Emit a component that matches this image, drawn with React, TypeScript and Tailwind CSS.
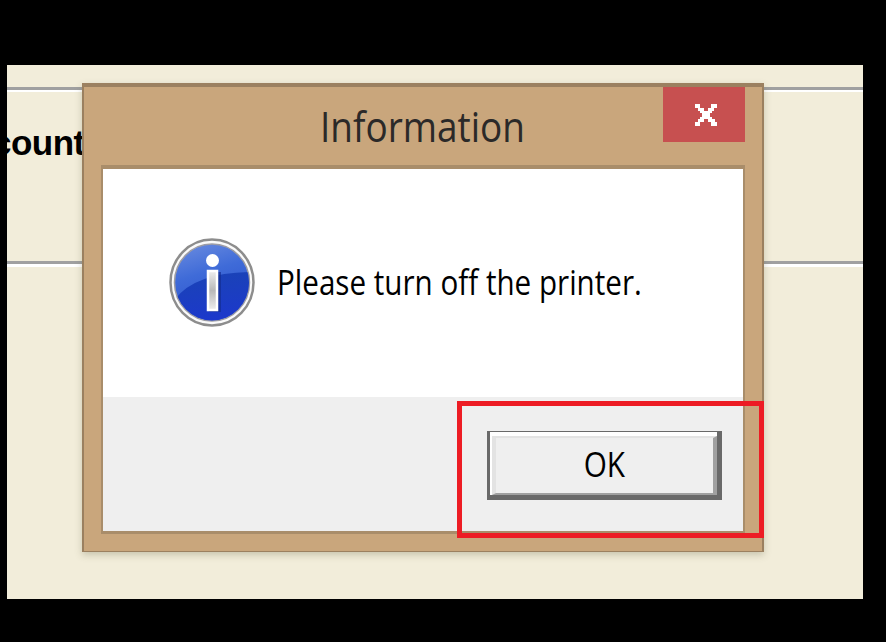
export default function App() {
  return (
    <div className="h-[642px] w-[886px] overflow-hidden bg-black pt-[65px] pl-[7px]">
      <div className="relative h-[534px] w-[856px] overflow-hidden bg-[#f2edda]">
        <div className="pt-[22px]">
          <div className="h-[5px] border-b-2 border-white bg-[#a0a0a0]" />
          <div className="h-[169px] pt-[31px] font-['Liberation_Sans',sans-serif] text-[35px] leading-[40px] font-bold text-black">
            <span className="-ml-[15px] block tracking-[-0.5px]">count</span>
          </div>
          <div className="h-[6px] border-b-[3px] border-white bg-[#a0a0a0]" />
        </div>

        <section className="absolute top-[18px] left-[75px] h-[469px] w-[682px] border-x-2 border-t-4 border-b border-[#9b8060] bg-[#c9a67c] pr-[17px] pl-[17px] shadow-[0_3px_7px_0_rgba(80,80,50,0.26)]">
          <header className="flex h-[78px] justify-end">
            <h1 className="flex-1 pt-[10px] pl-[219px] font-['Open_Sans','Noto_Sans',sans-serif] text-[42px] leading-[58px] text-[#2b2928]">
              <span className="inline-block origin-left scale-x-[0.88]">Information</span>
            </h1>
            <button aria-label="Close" className="flex h-[55px] w-[82px] items-center justify-center bg-[#c75050] pl-[4px]">
              <svg width="22" height="22" viewBox="0 0 22 22" fill="white" shapeRendering="crispEdges">
                <path d="M0 0H5V4H9V7H13V4H16V0H22V4H19V7H17V9H15V13H17V15H20V18H22V22H16V18H13V15H9V18H5V22H0V18H3V15H5V13H7V9H5V7H3V4H0Z" />
              </svg>
            </button>
          </header>
          <div className="flex h-[369px] flex-col border-x-2 border-t-4 border-b-[3px] border-[#a98d6a] bg-[#efefef]">
            <div className="flex h-[228px] items-center bg-white pl-[66px]">
              <svg width="87" height="90" viewBox="0 0 87 90">
                <defs>
                  <linearGradient id="blue" x1="0" y1="0" x2="0.3" y2="1">
                    <stop offset="0" stopColor="#6c8de0" />
                    <stop offset="0.45" stopColor="#3f6bd8" />
                    <stop offset="1" stopColor="#2a50cc" />
                  </linearGradient>
                  <linearGradient id="shade" x1="0" y1="0" x2="0.2" y2="1">
                    <stop offset="0" stopColor="#1a44b4" />
                    <stop offset="1" stopColor="#1c38cc" />
                  </linearGradient>
                  <linearGradient id="stem" x1="0" y1="0" x2="0" y2="1">
                    <stop offset="0" stopColor="#eee" />
                    <stop offset="0.5" stopColor="#b8b8b8" />
                    <stop offset="1" stopColor="#eee" />
                  </linearGradient>
                  <clipPath id="disc">
                    <ellipse cx="43" cy="44.500" rx="37" ry="38" />
                  </clipPath>
                </defs>
                <ellipse cx="43" cy="44.500" rx="41.500" ry="43" fill="#fafafa" stroke="#8d8d8d" strokeWidth="2.500" />
                <ellipse cx="43" cy="44.500" rx="37.500" ry="38.500" fill="url(#blue)" stroke="#9c9ca4" strokeWidth="1.500" />
                <path d="M4 64Q24 34 84 34V86H4Z" fill="url(#shade)" clipPath="url(#disc)" />
                <circle cx="43.500" cy="22.500" r="6.500" fill="white" />
                <path d="M49 34H52V74H40V72H49Z" fill="#142e92" opacity="0.7" />
                <rect x="39" y="33" width="9" height="39" fill="url(#stem)" stroke="white" strokeWidth="2.500" />
              </svg>
              <p className="-mt-[2px] ml-[21px] font-['Open_Sans','Noto_Sans',sans-serif] text-[35px] leading-[48px] whitespace-nowrap text-black">
                <span className="inline-block origin-left scale-x-[0.846]">Please turn off the printer.</span>
              </p>
            </div>
            <footer className="flex justify-end pt-[34px] pr-[21px]">
              <button className="h-[69px] w-[235px] border-t border-r-[5px] border-b-[5px] border-l-[3px] border-[#696969]">
                <span className="block h-full border-t-4 border-l-2 border-white">
                  <span className="flex h-full items-center justify-center border-t-2 border-r-4 border-b-2 border-l-4 border-t-[#e3e3e3] border-r-[#a0a0a0] border-b-[#a0a0a0] border-l-[#e3e3e3] pb-[4px] font-['Open_Sans','Noto_Sans',sans-serif] text-[35px] leading-[48px]">
                    <span className="inline-block scale-x-[0.85]">OK</span>
                  </span>
                </span>
              </button>
            </footer>
          </div>
        </section>

        <div className="pointer-events-none absolute top-[336px] left-[450px] h-[137px] w-[307px] border-[5px] border-[#ed1c24]" />
      </div>
    </div>
  );
}
